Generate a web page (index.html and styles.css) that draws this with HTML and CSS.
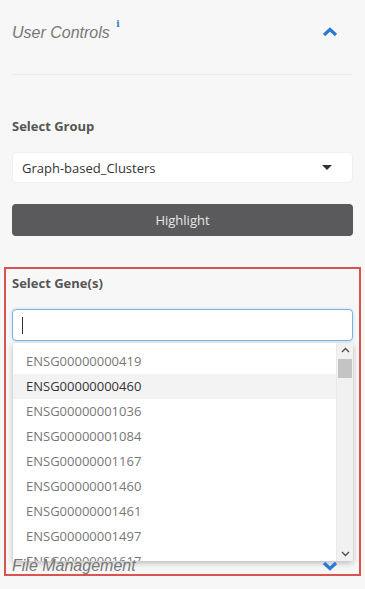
FILE: index.html
```html
<!DOCTYPE html>
<html lang="en">
<head>
    <meta charset="UTF-8">
    <meta name="viewport" content="width=device-width, initial-scale=1.0">
    <title>User Controls</title>
    <link rel="stylesheet" href="styles.css">
</head>
<body>
    <div class="sidebar">
        <div class="section-head">
            <span class="section-title">User Controls <sup class="info">i</sup></span>
            <svg class="chevron" width="16" height="10" viewBox="0 0 16 10"><polyline points="2,8 8,2.5 14,8" fill="none" stroke="#2b7bd3" stroke-width="3.2"/></svg>
        </div>

        <div class="controls">
            <label class="field-label">Select Group</label>
            <div class="select">
                <span>Graph-based_Clusters</span>
                <span class="caret"></span>
            </div>
            <button class="highlight-btn">Highlight</button>

            <!-- Gene picker -->
            <div class="gene-box">
                <label class="field-label">Select Gene(s)</label>
                <div class="combo">
                    <div class="gene-input"><span class="cursor"></span></div>
                    <div class="dropdown">
                        <ul class="options">
                            <li>ENSG00000000419</li>
                            <li class="active">ENSG00000000460</li>
                            <li>ENSG00000001036</li>
                            <li>ENSG00000001084</li>
                            <li>ENSG00000001167</li>
                            <li>ENSG00000001460</li>
                            <li>ENSG00000001461</li>
                            <li>ENSG00000001497</li>
                            <li>ENSG00000001617</li>
                        </ul>
                        <div class="scrollbar">
                            <svg width="17" height="14" viewBox="0 0 17 14"><polyline points="5,9 8.5,5.5 12,9" fill="none" stroke="#505050" stroke-width="1.4"/></svg>
                            <div class="thumb"></div>
                            <div class="track"></div>
                            <svg width="17" height="14" viewBox="0 0 17 14"><polyline points="5,5 8.5,8.5 12,5" fill="none" stroke="#505050" stroke-width="1.4"/></svg>
                        </div>
                    </div>
                </div>
            </div>
        </div>

        <div class="section-head file-head">
            <span class="section-title">File Management</span>
            <svg class="chevron" width="16" height="10" viewBox="0 0 16 10"><polyline points="2,2 8,7.5 14,2" fill="none" stroke="#2b7bd3" stroke-width="3.2"/></svg>
        </div>
    </div>
</body>
</html>
```
FILE: styles.css
```css
* {
    margin: 0;
    padding: 0;
    box-sizing: border-box;
}
body {
    font-family: 'Open Sans', 'Liberation Sans', sans-serif;
    background-color: #f7f7f7;
    color: #333;
    height: 589px;
    overflow: hidden;
}
.sidebar {
    padding: 0 12px;
}
.section-head {
    display: flex;
    justify-content: space-between;
    align-items: center;
    height: 75px;
    padding-top: 18px;
    padding-bottom: 35px;
    border-bottom: 1px solid #ececec;
}
.section-title {
    font-family: 'Liberation Sans', Arial, sans-serif;
    font-style: italic;
    font-size: 16px;
    line-height: 22px;
    color: #777;
}
.info {
    font-family: 'DejaVu Serif', serif;
    font-style: normal;
    font-weight: bold;
    font-size: 9px;
    color: #2f7ac0;
    margin-left: 2px;
    vertical-align: 11px;
}
.chevron {
    margin-right: 15px;
    margin-top: 6px;
}
.controls {
    padding-top: 43px;
}
.field-label {
    display: block;
    font-size: 13px;
    font-weight: bold;
    line-height: 17px;
    color: #555;
    margin-bottom: 17px;
}
.select {
    display: flex;
    justify-content: space-between;
    align-items: center;
    height: 31px;
    padding: 0 20px 0 9px;
    background: #fff;
    border: 1px solid #f0f0f0;
    border-radius: 4px;
    font-size: 13px;
    color: #333;
    margin-bottom: 21px;
}
.caret {
    width: 0;
    height: 0;
    border-left: 5px solid transparent;
    border-right: 5px solid transparent;
    border-top: 5px solid #333;
}
.highlight-btn {
    display: block;
    width: 100%;
    height: 32px;
    background: #5a5a5c;
    border: none;
    border-radius: 4px;
    color: #e6e6e6;
    font-family: 'Open Sans', sans-serif;
    font-size: 13px;
}
.gene-box {
    position: relative;
    margin-top: 39px;
}
.gene-box::after {
    content: '';
    position: absolute;
    left: -8px;
    right: -8px;
    top: -8px;
    height: 305px;
    border: 2px solid #d9534f;
    pointer-events: none;
    z-index: 3;
}
.combo {
    position: relative;
}
.gene-input {
    height: 32px;
    background: #fff;
    border: 1px solid #7fb2e3;
    border-radius: 4px;
    padding: 7px 9px;
    box-shadow: 0 0 3px rgba(102, 175, 233, 0.4);
}
.cursor {
    display: block;
    width: 1px;
    height: 17px;
    background: #333;
}
.dropdown {
    position: absolute;
    top: 34px;
    left: 1px;
    right: 0;
    height: 218px;
    display: flex;
    background: #fff;
    box-shadow: 0 2px 6px rgba(0, 0, 0, 0.25);
    overflow: hidden;
    z-index: 1;
}
.options {
    list-style: none;
    flex: 1;
    padding-top: 6px;
}
.options li {
    height: 25px;
    line-height: 25px;
    padding-left: 13px;
    font-size: 13px;
    color: #777;
}
.options li.active {
    background: #f3f3f3;
    color: #333;
}
.scrollbar {
    width: 17px;
    display: flex;
    flex-direction: column;
    background: #f1f1f1;
    border-left: 1px solid #eaeaea;
}
.thumb {
    height: 19px;
    margin: 2px 1px 0 1px;
    background: #c4c4c4;
}
.track {
    flex: 1;
}
.file-head {
    position: relative;
    z-index: 2;
    border-bottom: none;
    padding-top: 0;
    margin-top: 214px;
    height: 22px;
    padding-bottom: 0;
}
.file-head .chevron {
    margin-top: 0;
}
```
